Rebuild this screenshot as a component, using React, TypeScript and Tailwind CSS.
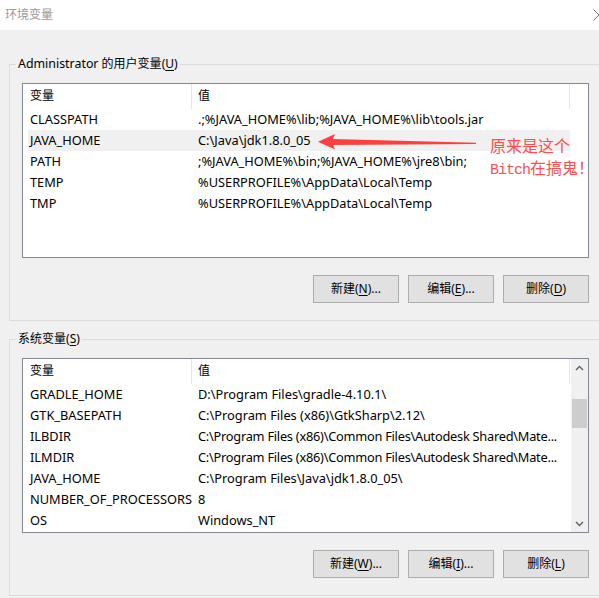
import React from "react";

type Row = { name: string; value: string; tight?: boolean };

const userVars: Row[] = [
	{ name: "CLASSPATH", value: ".;%JAVA_HOME%\\lib;%JAVA_HOME%\\lib\\tools.jar" },
	{ name: "JAVA_HOME", value: "C:\\Java\\jdk1.8.0_05" },
	{ name: "PATH", value: ";%JAVA_HOME%\\bin;%JAVA_HOME%\\jre8\\bin;" },
	{ name: "TEMP", value: "%USERPROFILE%\\AppData\\Local\\Temp" },
	{ name: "TMP", value: "%USERPROFILE%\\AppData\\Local\\Temp" },
];

const systemVars: Row[] = [
	{ name: "GRADLE_HOME", value: "D:\\Program Files\\gradle-4.10.1\\" },
	{ name: "GTK_BASEPATH", value: "C:\\Program Files (x86)\\GtkSharp\\2.12\\" },
	{ name: "ILBDIR", value: "C:\\Program Files (x86)\\Common Files\\Autodesk Shared\\Mate...", tight: true },
	{ name: "ILMDIR", value: "C:\\Program Files (x86)\\Common Files\\Autodesk Shared\\Mate...", tight: true },
	{ name: "JAVA_HOME", value: "C:\\Program Files\\Java\\jdk1.8.0_05\\" },
	{ name: "NUMBER_OF_PROCESSORS", value: "8" },
	{ name: "OS", value: "Windows_NT" },
];

function Key({ k }: { k: string }) {
	return (
		<>
			(<span className="underline underline-offset-2">{k}</span>)
		</>
	);
}

function Chevron({ down }: { down?: boolean }) {
	return (
		<svg width="9" height="6" viewBox="0 0 9 6" className={down ? "rotate-180" : ""}>
			<path d="M1 5 L4.5 1.5 L8 5" fill="none" stroke="#606060" strokeWidth="1.4" />
		</svg>
	);
}

function VarList({ rows, selected, scroll }: { rows: Row[]; selected?: number; scroll?: boolean }) {
	return (
		<div className="flex h-[175px] w-[567px] border border-[#828790] bg-white">
			<div className="w-[547px] pl-[5px]">
				<div className="flex h-[25px]">
					<div className="w-[164px] border-r border-[#e5e5e5] pl-[2px] leading-[24px]">变量</div>
					<div className="w-[378px] border-r border-[#e5e5e5] pl-[6px] leading-[24px]">值</div>
				</div>
				{rows.map((r, i) => (
					<div
						key={r.name + i}
						className={`flex h-[21px] w-[542px] text-[12.8px] leading-[21px] whitespace-nowrap ${i === selected ? "bg-[#f0f0f0]" : ""}`}
					>
						<div className="w-[164px] overflow-hidden pl-[2px]">{r.name}</div>
						<div className={`w-[378px] overflow-hidden pl-[6px] ${r.tight ? "tracking-[-0.25px]" : ""}`}>
							{r.value}
						</div>
					</div>
				))}
			</div>
			{scroll && (
				<div className="ml-[1px] flex w-[17px] flex-col bg-[#f0f0f0]">
					<div className="flex h-[17px] items-center justify-center">
						<Chevron />
					</div>
					<div className="flex-1">
						<div className="mx-[1px] mt-[23px] h-[29px] bg-[#cdcdcd]" />
					</div>
					<div className="flex h-[17px] items-center justify-center">
						<Chevron down />
					</div>
				</div>
			)}
		</div>
	);
}

function Buttons({ keys }: { keys: [string, string, string] }) {
	const labels = ["新建", "编辑", "删除"];
	return (
		<div className="mt-[17px] flex w-[567px] justify-end gap-[9px]">
			{labels.map((l, i) => (
				<button
					key={l}
					className="h-[28px] w-[86px] border border-[#adadad] bg-[#e1e1e1] text-[12px] text-black"
				>
					{l}
					<Key k={keys[i]} />
					{i < 2 ? "..." : ""}
				</button>
			))}
		</div>
	);
}

function Group({ title, children, className }: { title: React.ReactNode; children: React.ReactNode; className?: string }) {
	return (
		<fieldset className={`ml-[9px] w-[620px] border border-[#dcdcdc] pb-[17px] ${className ?? ""}`}>
			<legend className="ml-[6px] px-[2px] leading-[18px]">{title}</legend>
			<div className="mt-[10px] pl-[12px]">{children}</div>
		</fieldset>
	);
}

export default function App() {
	return (
		<div
			className="relative h-[598px] w-[599px] overflow-hidden bg-[#f0f0f0] text-[12px] text-black"
			style={{ fontFamily: '"Noto Sans", "Noto Sans CJK SC", sans-serif' }}
		>
			<div className="flex h-[30px] items-center justify-between bg-white pl-[5px] text-[#999999]">
				<span>环境变量</span>
				<svg width="12" height="12" viewBox="0 0 12 12" className="-mr-[6px]">
					<path d="M0.5 0.5 L11.5 11.5 M0.5 11.5 L11.5 0.5" stroke="#777777" strokeWidth="1" />
				</svg>
			</div>

			<div className="pt-[25px]">
				<Group
					title={
						<>
							<span className="text-[12.4px]">Administrator</span> 的用户变量<Key k="U" />
						</>
					}
				>
					<VarList rows={userVars} selected={1} />
					<Buttons keys={["N", "E", "D"]} />
				</Group>

				<Group
					className="mt-[9px]"
					title={
						<>
							系统变量<Key k="S" />
						</>
					}
				>
					<VarList rows={systemVars} scroll />
					<Buttons keys={["W", "I", "L"]} />
				</Group>
			</div>

			{/* red annotation drawn over the user list */}
			<svg className="absolute left-[316px] top-[130px]" width="162" height="24" viewBox="0 0 162 24">
				<polygon
					points="2,11.7 19,4 17,9 160,12.8 160,14 17,15 19,19.5"
					fill="#fd3f3f"
				/>
			</svg>
			<div
				className="absolute left-[490px] top-[134px] text-[16px] leading-[22px] text-[#ff4d4d]"
				style={{ fontFamily: '"Noto Sans CJK SC", sans-serif' }}
			>
				<div>原来是这个</div>
				<div className="whitespace-nowrap">
					<span
						className="text-[15px] tracking-[-1px]"
						style={{ fontFamily: '"Liberation Mono", monospace' }}
					>
						Bitch
					</span>
					在搞鬼！
				</div>
			</div>
		</div>
	);
}
